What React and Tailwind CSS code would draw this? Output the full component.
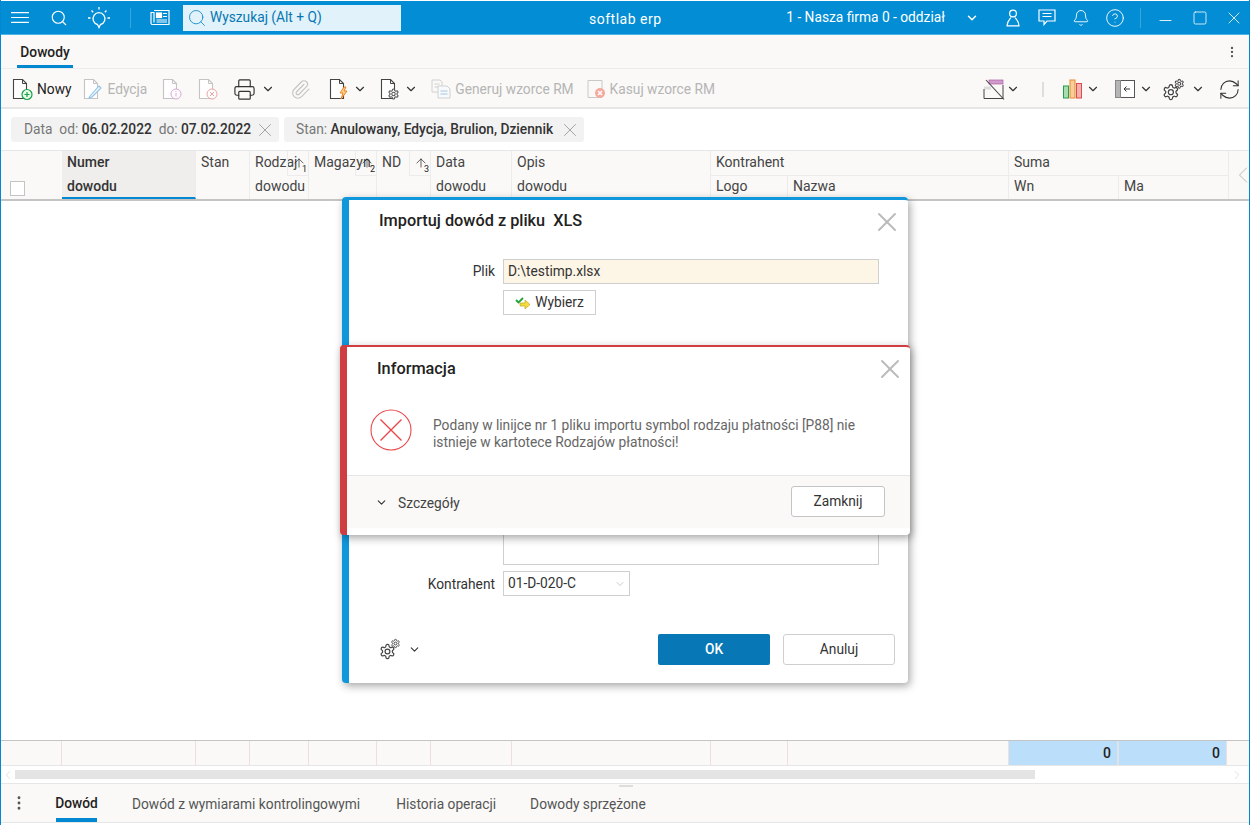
import React from "react";
import { Search, ChevronDown, Bell, CircleHelp, Minus, Square, X, Printer, Paperclip, RefreshCw, MoreVertical, ChevronLeft, ChevronRight, ArrowUp } from "lucide-react";

const GEAR = "M12.22 2h-.44a2 2 0 0 0-2 2v.18a2 2 0 0 1-1 1.73l-.43.25a2 2 0 0 1-2 0l-.15-.08a2 2 0 0 0-2.73.73l-.22.38a2 2 0 0 0 .73 2.73l.15.1a2 2 0 0 1 1 1.72v.51a2 2 0 0 1-1 1.74l-.15.09a2 2 0 0 0-.73 2.73l.22.38a2 2 0 0 0 2.73.73l.15-.08a2 2 0 0 1 2 0l.43.25a2 2 0 0 1 1 1.73V20a2 2 0 0 0 2 2h.44a2 2 0 0 0 2-2v-.18a2 2 0 0 1 1-1.73l.43-.25a2 2 0 0 1 2 0l.15.08a2 2 0 0 0 2.73-.73l.22-.39a2 2 0 0 0-.73-2.73l-.15-.08a2 2 0 0 1-1-1.74v-.5a2 2 0 0 1 1-1.74l.15-.09a2 2 0 0 0 .73-2.73l-.22-.38a2 2 0 0 0-2.73-.73l-.15.08a2 2 0 0 1-2 0l-.43-.25a2 2 0 0 1-1-1.73V4a2 2 0 0 0-2-2z";

const Chev = ({ c = "text-[#333]", s = 14 }) => <ChevronDown size={s} strokeWidth={2} className={c} />;

const GearIn = ({ x, y, s, sw = 1.8, stroke = "#444" }) => (
  <svg x={x} y={y} width={s} height={s} viewBox="0 0 24 24" fill="#fff" stroke={stroke} strokeWidth={sw}>
    <path d={GEAR} />
    <circle cx="12" cy="12" r="3.4" />
  </svg>
);

const Doc = ({ children, op = "#444" }) => (
  <svg width="22" height="24" viewBox="2 0 22 24" fill="none">
    <path d="M3.5 2.5h9l4 4v15h-13z" stroke={op} strokeWidth="1.1" fill="#fff" />
    <path d="M12.5 2.5v4h4" stroke={op} strokeWidth="1" />
    {children}
  </svg>
);

const Gears = ({ size = 24 }) => (
  <svg width={size} height={size} viewBox="0 0 24 24" fill="none">
    <GearIn x="0" y="5.5" s="18.5" sw="1.7" />
    <GearIn x="12.5" y="0.5" s="11" sw="2.3" />
  </svg>
);

const TbBtn = ({ children, label, dis, gap = "gap-[3px]", className = "" }) => (
  <div className={`flex items-center ${gap} text-[13.75px] ${dis ? "text-[#b5b5b5]" : "text-[#222]"} ${className}`}>
    {children}
    {label && <span>{label}</span>}
  </div>
);

const headerCols = [
  { w: "w-[134px]", a: "Numer", b: "dowodu", active: true },
  { w: "w-[54px]", a: "Stan", b: "" },
  { w: "w-[59px]", a: "Rodzaj", b: "dowodu", sort: "1" },
  { w: "w-[68px]", a: "Magazyn", b: "", sort: "2" },
  { w: "w-[54px]", a: "ND", b: "", sort: "3" },
  { w: "w-[81px]", a: "Data", b: "dowodu" },
  { w: "w-[199px]", a: "Opis", b: "dowodu" },
];
const footW = ["w-[61px]", "w-[134px]", "w-[54px]", "w-[59px]", "w-[68px]", "w-[54px]", "w-[81px]", "w-[199px]", "w-[77px]", "w-[221px]"];

const Chip = ({ children, w }) => (
  <div className={`h-[25px] ${w} bg-[#f2f2f2] rounded-[3px] flex items-center justify-between pl-[13px] pr-[3px] text-[13.75px] text-[#777] whitespace-nowrap`}>
    <span>{children}</span>
    <X size={22} strokeWidth={0.8} className="text-[#888]" />
  </div>
);

export default function App() {
  return (
    <div className="relative w-[1250px] h-[825px] overflow-hidden bg-white border-x border-[#0288d1] flex flex-col text-[#222] font-['Roboto',sans-serif]">
      {/* Title bar */}
      <div className="h-[34px] mt-px shrink-0 bg-[#028dd4] border-b border-[#4fb3e6] flex items-center text-white relative">
        <svg width="18" height="11" viewBox="0 0 18 11" stroke="white" strokeWidth="1.1" className="ml-[10px]">
          <path d="M0 .6h18M0 5.5h18M0 10.4h18" />
        </svg>
        <Search size={18} strokeWidth={1.5} className="ml-[21px]" />
        <svg width="24" height="24" viewBox="0 0 24 24" fill="none" stroke="white" strokeWidth="1.3" className="ml-[19px]">
          <path d="M10.5 18.5a6 6 0 1 1 3 0l-1.5 3z" />
          <path d="M12 1v2.5M1 12h2.5M20.5 12H23M4.5 4.5l1.7 1.7M19.5 4.5l-1.7 1.7" />
        </svg>
        <div className="w-px h-[20px] bg-[#3aa5dd] ml-[19px]" />
        <svg width="20" height="17" viewBox="0 0 20 17" fill="none" stroke="white" strokeWidth="1.2" className="ml-[19px]">
          <path d="M4 1.5h15v14H2.5a1.5 1.5 0 0 1-1.5-1.5V3.5h3v10" />
          <rect x="6.5" y="4" width="5" height="4.5" fill="white" />
          <path d="M13 4.5h4M13 7.5h4M6.5 11h10.5M6.5 13h10.5" />
        </svg>
        <div className="ml-[13px] w-[218px] h-[26px] bg-[#e1f2fb] flex items-center text-[#0677b2] text-[13.75px]">
          <Search size={20} strokeWidth={1} className="ml-[4px] mr-[3px] text-[#0a84c6]" />
          Wyszukaj (Alt + Q)
        </div>
        <div className="absolute left-[588px] top-[10px] text-[14px] leading-[17px] tracking-[0.5px]">softlab erp</div>
        <div className="ml-auto flex items-center">
          <span className="text-[13.75px]">1 - Nasza firma 0 - oddział</span>
          <ChevronDown size={14} strokeWidth={2.5} className="ml-[20px]" />
          <svg width="14" height="18" viewBox="0 0 14 18" fill="none" stroke="white" strokeWidth="1.2" className="ml-[27px]">
            <circle cx="7" cy="4.5" r="3.4" />
            <path d="M5 8.5C3.5 10.5 1 12.5 1 16.8h12c0-4.3-2.5-6.3-4-8.3" />
          </svg>
          <svg width="18" height="17" viewBox="0 0 18 17" fill="none" stroke="white" strokeWidth="1.2" className="ml-[18px]">
            <path d="M1 1h16v11H9l-3 3.5V12H1z" /><path d="M4.5 4.5h9M4.5 7.5h9" />
          </svg>
          <Bell size={18} strokeWidth={1.2} className="ml-[16px]" />
          <CircleHelp size={20} strokeWidth={1.1} className="ml-[15px]" />
          <div className="w-px h-[20px] bg-[#3aa5dd] ml-[15px]" />
          <Minus size={19} strokeWidth={1.1} className="ml-[15px] mt-[6px]" />
          <Square size={16} strokeWidth={1.2} className="ml-[17px]" />
          <X size={20} strokeWidth={1} className="ml-[16px] mr-[5px]" />
        </div>
      </div>

      {/* Tabs */}
      <div className="h-[34px] shrink-0 bg-[#faf9f7] border-b border-[#ececec] flex items-stretch justify-between">
        <div className="ml-[16px] w-[56px] border-b-[3px] border-[#0288d1] text-[13.75px] font-medium flex items-center justify-center pt-[5px]">Dowody</div>
        <MoreVertical size={14} strokeWidth={2} className="text-[#555] self-center mr-[10px]" />
      </div>

      {/* Toolbar */}
      <div className="h-[40px] shrink-0 bg-[#faf9f7] border-b-2 border-[#e6e6e6] flex items-center pl-[11px] pt-[2px]">
        <TbBtn label="Nowy"><Doc><circle cx="17" cy="17.5" r="5" stroke="#16a34a" strokeWidth="1.2" fill="#eafbe8"/><path d="M17 15v5M14.5 17.5h5" stroke="#16a34a" strokeWidth="1.2"/></Doc></TbBtn>
        <TbBtn label="Edycja" dis className="ml-[11px]"><Doc op="#c4c4c4"><path d="M9 19l9-10 2 2-9 9-3 1z" stroke="#8fc2e6" strokeWidth="1.1" fill="#eef7fd"/></Doc></TbBtn>
        <TbBtn dis className="ml-[15px]"><Doc op="#c4c4c4"><circle cx="16" cy="17" r="5" stroke="#d9a5d6" fill="#fff"/><path d="M16 16v3.5M16 14.2v.8" stroke="#d9a5d6"/></Doc></TbBtn>
        <TbBtn dis className="ml-[14px]"><Doc op="#c4c4c4"><circle cx="16" cy="17" r="5" stroke="#f0a3a3" fill="#fff"/><path d="M14 15l4 4M18 15l-4 4" stroke="#f0a3a3"/></Doc></TbBtn>
        <div className="flex items-center ml-[13px] gap-[5px]">
          <Printer size={23} strokeWidth={1.2} className="text-[#333]" />
          <Chev />
        </div>
        <Paperclip size={21} strokeWidth={1.3} className="text-[#c4c4c4] ml-[15px]" />
        <div className="flex items-center ml-[18px] gap-[2px]">
          <Doc><path d="M17 10l-4 6h3l-2 6 6-8h-3l2-4z" fill="#fbd38d" stroke="#ea7a16" strokeWidth=".9"/></Doc>
          <Chev />
        </div>
        <div className="flex items-center ml-[13px] gap-[2px]">
          <Doc><GearIn x="9.5" y="11" s="12" sw="2.2" stroke="#555" /></Doc>
          <Chev />
        </div>
        <TbBtn label="Generuj wzorce RM" dis gap="gap-[4px]" className="ml-[13px]">
          <svg width="20" height="20" viewBox="0 0 20 20" fill="none" stroke="#d0d0d0"><path d="M1 1h8l2 2v10H1zM3.5 5h5M3.5 8h5" /><path d="M7 7h9l3 3v9H7z" fill="#f7fafc" /><path d="M9.5 12h7M9.5 15h7" stroke="#a9c4dc"/></svg>
        </TbBtn>
        <TbBtn label="Kasuj wzorce RM" dis className="ml-[13px]">
          <svg width="20" height="20" viewBox="0 0 20 20" fill="none"><path d="M1 1.5h14v17H1z" stroke="#c8c8c8" /><circle cx="13" cy="14" r="5" fill="#f5a99e"/><path d="M11 12l4 4M15 12l-4 4" stroke="#fff" strokeWidth="1.5"/></svg>
        </TbBtn>
        <div className="ml-auto flex items-center">
          <svg width="22" height="21" viewBox="0 0 22 21" fill="none" stroke="#444">
            <rect x="6" y="1" width="14" height="4" fill="#cf9ccb" stroke="#a85fa4" strokeWidth=".7" />
            <path d="M1 7.5h7v3H1z" fill="#ddd" stroke="none" />
            <path d="M1 10v9.5h19V6" strokeWidth="1" /><path d="M3 1l18 19.5" strokeWidth="1.1" />
          </svg>
          <Chev c="text-[#333] ml-[1px]" />
          <div className="w-[2px] h-[15px] bg-[#ddd] ml-[22px]" />
          <svg width="21" height="20" viewBox="0 0 20 20" className="ml-[18px]">
            <rect x="1" y="7" width="5" height="12" fill="#a7ddb0" stroke="#22a04a" />
            <rect x="7.5" y="1" width="5" height="18" fill="#f8cf9a" stroke="#ec8a2c" />
            <rect x="14" y="4.5" width="5" height="14.5" fill="#f3b1b1" stroke="#dd4c4c" />
          </svg>
          <Chev c="text-[#333] ml-[3px]" />
          <svg width="20" height="18" viewBox="0 0 20 18" fill="none" className="ml-[15px]">
            <rect x=".5" y=".5" width="19" height="17" fill="#fff" stroke="#555" />
            <rect x=".5" y=".5" width="5" height="17" fill="#b5b5b5" stroke="#888" />
            <path d="M15 9H9M11.5 6.5L9 9l2.5 2.5" stroke="#333" />
          </svg>
          <Chev c="text-[#333] ml-[4px]" />
          <div className="ml-[9px]"><Gears size={23} /></div>
          <Chev c="text-[#333] ml-[6px]" />
          <RefreshCw size={23} strokeWidth={1.1} className="text-[#333] ml-[13px] mr-[8px]" />
        </div>
      </div>

      {/* Filters */}
      <div className="h-[42px] shrink-0 bg-white flex items-center gap-[5px] pl-[10px] border-b border-[#e6e6e6]">
        <Chip w="w-[268px]">Data&nbsp; od: <b className="font-medium text-[#333]">06.02.2022</b>&nbsp; do: <b className="font-medium text-[#333]">07.02.2022</b></Chip>
        <Chip w="w-[300px]"><span className="-ml-[1px]">Stan: </span><span className="text-[#333] font-medium">Anulowany, Edycja, Brulion, Dziennik</span></Chip>
      </div>

      {/* Grid header */}
      <div className="h-[50px] shrink-0 bg-[#faf9f7] border-b-2 border-[#c4c4c4] flex text-[14px] text-[#444]">
        <div className="w-[61px] shrink-0 flex items-end pl-[9px] pb-[3px]">
          <div className="w-[15px] h-[15px] border border-[#c4c4c4] bg-white" />
        </div>
        {headerCols.map((c) => (
          <div key={c.a} className={`${c.w} shrink-0 relative pl-[5px] pt-[2px] border-r border-[#ececec] ${c.active ? "bg-[#efeeec] border-b-2 border-b-[#0288d1] font-medium text-[#333]" : ""}`}>
            <div className="leading-[18px] whitespace-nowrap">{c.a}</div>
            <div className="leading-[18px] mt-[6px] whitespace-nowrap">{c.b}</div>
            {c.sort && (
              <div className="absolute right-0 top-0 w-[21px] h-[25px] border-b border-l border-[#ececec] flex items-center justify-center">
                <ArrowUp size={14} strokeWidth={1.2} className="text-[#222] ml-[2px]" />
                <span className="absolute right-[1px] bottom-[1px] text-[9px] leading-[9px] text-[#222]">{c.sort}</span>
              </div>
            )}
          </div>
        ))}
        <div className="w-[298px] shrink-0 flex flex-col">
          <div className="h-[25px] border-b border-r border-[#ececec] pl-[5px] pt-[2px] leading-[18px]">Kontrahent</div>
          <div className="flex flex-1">
            <div className="w-[77px] border-r border-[#ececec] pl-[5px] pt-[1px] leading-[18px]">Logo</div>
            <div className="flex-1 border-r border-[#ececec] pl-[5px] pt-[1px] leading-[18px]">Nazwa</div>
          </div>
        </div>
        <div className="w-[220px] shrink-0 flex flex-col">
          <div className="h-[25px] border-b border-r border-[#ececec] pl-[5px] pt-[2px] leading-[18px]">Suma</div>
          <div className="flex flex-1">
            <div className="w-[110px] border-r border-[#ececec] pl-[5px] pt-[1px] leading-[18px]">Wn</div>
            <div className="flex-1 border-r border-[#ececec] pl-[5px] pt-[1px] leading-[18px]">Ma</div>
          </div>
        </div>
        <div className="flex-1 flex items-center justify-end">
          <ChevronLeft size={28} strokeWidth={0.7} className="text-[#aaa] -mr-[6px] shrink-0" />
        </div>
      </div>

      {/* Grid body */}
      <div className="flex-1 bg-white" />

      {/* Grid footer */}
      <div className="h-[26px] shrink-0 bg-[#faf9f7] border-y border-t-[#c4c4c4] border-b-[#e6e6e6] flex">
        {footW.map((w, i) => <div key={i} className={`${w} shrink-0 border-r border-[#f0dede]`} />)}
        <div className="w-[110px] shrink-0 bg-[#bbdffa] border-r-2 border-[#dfe3e8] flex items-center justify-end pr-[6px] text-[14px] font-medium">0</div>
        <div className="w-[108px] shrink-0 bg-[#bbdffa] border-r border-[#f0dede] flex items-center justify-end pr-[6px] text-[14px] font-medium">0</div>
      </div>

      {/* Scrollbar */}
      <div className="h-[18px] shrink-0 bg-white border-b border-[#e6e6e6] flex items-center">
        <ChevronLeft size={14} strokeWidth={1} className="text-[#ccc] w-[14px] shrink-0" />
        <div className="flex-1"><div className="w-[1020px] h-[9px] bg-[#e4e4e4] -mt-[1px]" /></div>
        <ChevronRight size={14} strokeWidth={1} className="text-[#ccc] mr-[5px]" />
      </div>

      {/* Bottom tabs */}
      <div className="h-[39px] shrink-0 bg-[#faf9f7] border-b border-[#e6e6e6] flex items-stretch text-[13.75px] text-[#555] relative mb-[2px]">
        <div className="absolute left-[618px] top-[1px] w-[14px] h-[2px] border-y border-[#ddd]" />
        <MoreVertical size={18} strokeWidth={1.8} className="text-[#555] ml-[9px] self-center" />
        <div className="ml-[28px] w-[41px] border-b-[4px] border-[#0288d1] flex items-center justify-center font-medium text-[#222] pt-[5px]">Dowód</div>
        <div className="ml-[35px] flex items-center pt-[2px]">Dowód z wymiarami kontrolingowymi</div>
        <div className="ml-[36px] flex items-center pt-[2px]">Historia operacji</div>
        <div className="ml-[34px] flex items-center pt-[2px]">Dowody sprzężone</div>
      </div>

      {/* Import dialog */}
      <div className="absolute left-[341px] top-[197px] w-[566px] h-[486px] bg-white rounded-[4px] border-l-[7px] border-t-[3px] border-[#0f97dc] shadow-[2px_3px_8px_rgba(0,0,0,0.35)] text-[13.75px]">
        <div className="absolute left-[30px] top-[11px] text-[16.3px] font-medium leading-[20px] text-[#222] whitespace-pre">Importuj dowód z pliku  XLS</div>
        <X size={32} strokeWidth={1.5} className="absolute right-[5px] top-[6px] text-[#bbb]" />
        <div className="absolute right-[413px] top-[62px] leading-[18px] text-[#333]">Plik</div>
        <div className="absolute left-[154px] top-[59px] w-[376px] h-[25px] bg-[#fdf5e6] border border-[#cfcfcf] pl-[4px] leading-[23px] text-[#333]">D:\testimp.xlsx</div>
        <div className="absolute left-[154px] top-[90px] w-[93px] h-[25px] bg-white border border-[#cfcfcf] flex items-center justify-center gap-[4px] text-[#333]">
          <svg width="16" height="12" viewBox="0 0 16 12">
            <path d="M5 6h5V3l5 4.5-5 4.5V9H5z" fill="#f6dc3c" stroke="#b39b1a" strokeWidth=".6" />
            <path d="M1 3l2.5 2.5L8 1" fill="none" stroke="#1fa33a" strokeWidth="1.8" />
          </svg>
          Wybierz
        </div>
        <div className="absolute left-[154px] top-[320px] w-[376px] h-[45px] border-x border-b border-[#cfcfcf]" />
        <div className="absolute right-[413px] top-[375px] leading-[18px] text-[#333]">Kontrahent</div>
        <div className="absolute left-[154px] top-[371px] w-[127px] h-[25px] bg-white border border-[#cfcfcf] pl-[4px] flex items-center justify-between pr-[3px] text-[#333]">
          01-D-020-C
          <ChevronDown size={12} strokeWidth={1} className="text-[#999]" />
        </div>
        <div className="absolute left-[30px] top-[438px] flex items-center gap-[7px]">
          <Gears size={22} />
          <Chev s={13} />
        </div>
        <div className="absolute left-[309px] top-[434px] w-[112px] h-[31px] bg-[#0778b5] rounded-[2px] text-white font-medium flex items-center justify-center">OK</div>
        <div className="absolute left-[434px] top-[434px] w-[112px] h-[31px] bg-white rounded-[3px] border border-[#cfcfcf] text-[#333] flex items-center justify-center">Anuluj</div>
      </div>

      {/* Error dialog */}
      <div className="absolute left-[339px] top-[345px] w-[570px] h-[190px] bg-white rounded-[4px] border-l-[7px] border-t-[2px] border-[#cf3d40] shadow-[2px_3px_8px_rgba(0,0,0,0.35)] text-[13.75px] overflow-hidden">
        <div className="absolute left-[30px] top-[12px] text-[16.3px] font-medium leading-[20px] text-[#222]">Informacja</div>
        <X size={32} strokeWidth={1.5} className="absolute right-[4px] top-[6px] text-[#bbb]" />
        <svg width="42" height="42" viewBox="0 0 42 42" fill="none" stroke="#e8474c" className="absolute left-[23px] top-[62px]">
          <circle cx="21" cy="21" r="20" strokeWidth="1.1" />
          <path d="M10.5 10.5l21 21M31.5 10.5l-21 21" strokeWidth="1.4" />
        </svg>
        <div className="absolute left-[86px] top-[70px] w-[440px] leading-[17px] text-[#666]">
          Podany w linijce nr 1 pliku importu symbol rodzaju płatności [P88] nie istnieje w kartotece Rodzajów płatności!
        </div>
        <div className="absolute left-0 right-0 top-[128px] h-[53px] bg-[#faf9f7] border-t border-[#e6e6e6]">
          <ChevronDown size={13} strokeWidth={2} className="absolute left-[28px] top-[20px] text-[#333]" />
          <div className="absolute left-[51px] top-[18px] leading-[18px] text-[#444]">Szczegóły</div>
          <div className="absolute left-[444px] top-[10px] w-[94px] h-[31px] bg-white rounded-[3px] border border-[#c4c4c4] text-[#333] flex items-center justify-center">Zamknij</div>
        </div>
      </div>
    </div>
  );
}
